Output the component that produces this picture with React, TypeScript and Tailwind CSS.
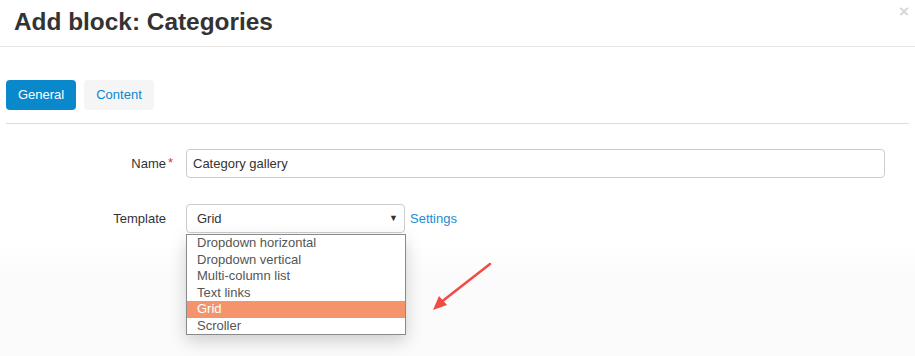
import React from 'react';

const options = [
  'Dropdown horizontal',
  'Dropdown vertical',
  'Multi-column list',
  'Text links',
  'Grid',
  'Scroller',
];

const App = () => {
  return (
    <div
      className="relative w-[915px] h-[356px] overflow-hidden bg-[linear-gradient(to_bottom,#ffffff_245px,#fbfbfb_275px)] text-[13px] text-[#333]"
      style={{ fontFamily: '"Liberation Sans", Arial, sans-serif' }}
    >
      {/* Header */}
      <div className="relative h-[47px] border-b border-[#e5e5e5] pl-[14px] pt-[9px]">
        <h1 className="text-[24.4px] leading-[26px] font-bold text-[#333]">Add block: Categories</h1>
        <span className="absolute right-[6px] top-[2px] text-[17px] font-bold leading-[20px] text-[#d6d6d6]">×</span>
      </div>

      {/* Tabs */}
      <div className="px-[6px] pt-[33px]">
        <div className="flex gap-[8px]">
          <button className="h-[30px] w-[70px] rounded-[4px] bg-[#0a88cc] text-white text-[13px]">General</button>
          <button className="h-[30px] w-[70px] rounded-[4px] bg-[#f5f5f5] text-[#0a88cc] text-[13px]">Content</button>
        </div>
        <div className="mt-[13px] h-px w-[903px] bg-[#dcdcdc]" />
      </div>

      {/* Form */}
      <div className="flex flex-col gap-[26px] pt-[25px]">
        <div className="flex items-center">
          <label className="relative w-[166px] text-right text-[#333]">
            Name
            <span className="absolute left-[168px] top-[-1px] text-[#e2343a]">*</span>
          </label>
          <div className="ml-[20px] flex h-[29px] w-[699px] items-center rounded-[4px] border border-[#cccccc] px-[6px]">
            Category gallery
          </div>
        </div>

        <div className="flex items-center">
          <label className="w-[166px] text-right text-[#333]">Template</label>
          <div className="relative ml-[20px]">
            <div className="flex h-[29px] w-[219px] items-center justify-between rounded-[4px] border border-[#cccccc] pl-[10px] pr-[6px]">
              <span>Grid</span>
              <span className="text-[9px] text-[#333]">▼</span>
            </div>
            {/* Open list */}
            <div className="absolute left-0 top-[30px] z-10 w-[220px] border border-[#8a8a8a] bg-white shadow-[0_6px_16px_rgba(0,0,0,0.18)]">
              {options.map((o) => (
                <div
                  key={o}
                  className={`h-[16.5px] pl-[10px] leading-[16.5px] ${
                    o === 'Grid' ? 'bg-[#f4946c] text-white' : 'text-[#555]'
                  }`}
                >
                  {o}
                </div>
              ))}
            </div>
          </div>
          <a className="ml-[5px] text-[#1a8cd8]">Settings</a>
        </div>
      </div>

      {/* Annotation arrow */}
      <svg className="absolute left-[430px] top-[260px]" width="66" height="54" viewBox="0 0 66 54">
        <line x1="60" y1="4" x2="10" y2="43" stroke="#f24a44" strokeWidth="2.5" strokeLinecap="round" />
        <polygon points="3,50 9,36 17,45" fill="#f24a44" />
      </svg>
    </div>
  );
};

export default App;
